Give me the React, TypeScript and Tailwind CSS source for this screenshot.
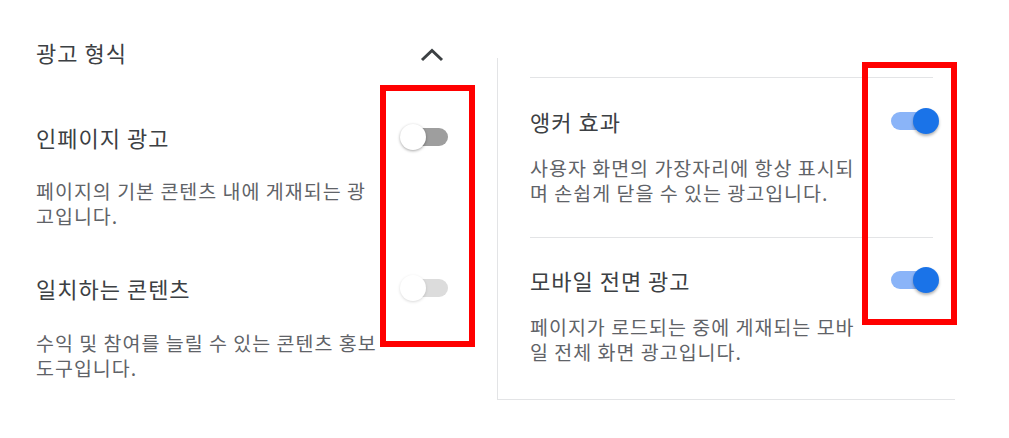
import React from 'react';

const font = { fontFamily: '"Noto Sans CJK KR", "Noto Sans", sans-serif' };

const Toggle = ({ on, faded }: { on?: boolean; faded?: boolean }) => (
  <div
    className={`relative w-[46px] h-[18px] rounded-full ${
      on ? 'bg-[#8ab4f8]' : faded ? 'bg-[#dcdcdc]' : 'bg-[#9e9e9e]'
    }`}
  >
    <div
      className={`absolute top-[-4px] w-[26px] h-[26px] rounded-full ${
        on
          ? 'right-[-2px] bg-[#1a73e8] shadow-[0_2px_3px_rgba(0,0,0,0.3)]'
          : faded
          ? 'left-[-2px] bg-white shadow-[0_1px_3px_rgba(0,0,0,0.15)]'
          : 'left-[-2px] bg-white shadow-[0_1px_3px_rgba(0,0,0,0.35)]'
      }`}
    />
  </div>
);

const Row = ({ title, toggle, className = '' }: { title: string; toggle: React.ReactNode; className?: string }) => (
  <div className={`flex items-center justify-between h-[28px] ${className}`}>
    <div className="text-[22px] leading-[28px] text-[#3c4043] tracking-[1px]">{title}</div>
    {toggle}
  </div>
);

const Desc = ({ children, className = '' }: { children: React.ReactNode; className?: string }) => (
  <p className={`text-[19.5px] leading-[25px] text-[#5f6368] tracking-[1px] ${className}`}>{children}</p>
);

export default function App() {
  return (
    <div className="relative w-[1009px] h-[438px] bg-white overflow-hidden" style={font}>
      <div className="flex">
        {/* left column */}
        <div className="w-[497px] shrink-0 pl-[36px] pr-[49px] pt-[38px]">
          <div className="flex items-center justify-between h-[28px]">
            <div className="text-[22px] leading-[28px] text-[#3c4043] tracking-[1px]">광고 형식</div>
            <svg width="24" height="16" viewBox="0 0 24 16" className="mr-[4px] mt-[5px]">
              <path d="M2 13 L12 3.5 L22 13" fill="none" stroke="#3c4043" strokeWidth="3" />
            </svg>
          </div>

          <Row className="mt-[57px]" title="인페이지 광고" toggle={<Toggle />} />
          <Desc className="mt-[27px] w-[345px]">페이지의 기본 콘텐츠 내에 게재되는 광고입니다.</Desc>

          <Row className="mt-[46px]" title="일치하는 콘텐츠" toggle={<Toggle faded />} />
          <Desc className="mt-[28px] w-[345px]">수익 및 참여를 늘릴 수 있는 콘텐츠 홍보 도구입니다.</Desc>
        </div>

        {/* right column */}
        <div className="mt-[58px] w-[458px] h-[342px] border-l border-b border-[#e3e4e6] pl-[32px] pr-[22px] pt-[19px]">
          <div className="border-t border-[#e3e4e6]" />
          <Row className="mt-[29px] mr-[-4px]" title="앵커 효과" toggle={<Toggle on />} />
          <Desc className="mt-[20px] w-[335px]">
            사용자 화면의 가장자리에 항상 표시되며 손쉽게 닫을 수 있는 광고입니다.
          </Desc>
          <div className="mt-[32px] border-t border-[#e3e4e6]" />
          <Row className="mt-[28px] mr-[-4px]" title="모바일 전면 광고" toggle={<Toggle on />} />
          <Desc className="mt-[20px] w-[335px]">
            페이지가 로드되는 중에 게재되는 모바일 전체 화면 광고입니다.
          </Desc>
        </div>
      </div>

      {/* annotation boxes */}
      <div className="absolute left-[380px] top-[85px] w-[95px] h-[262px] border-[6px] border-[#ff0000]" />
      <div className="absolute left-[862px] top-[62px] w-[95px] h-[263px] border-[6px] border-[#ff0000]" />
    </div>
  );
}
